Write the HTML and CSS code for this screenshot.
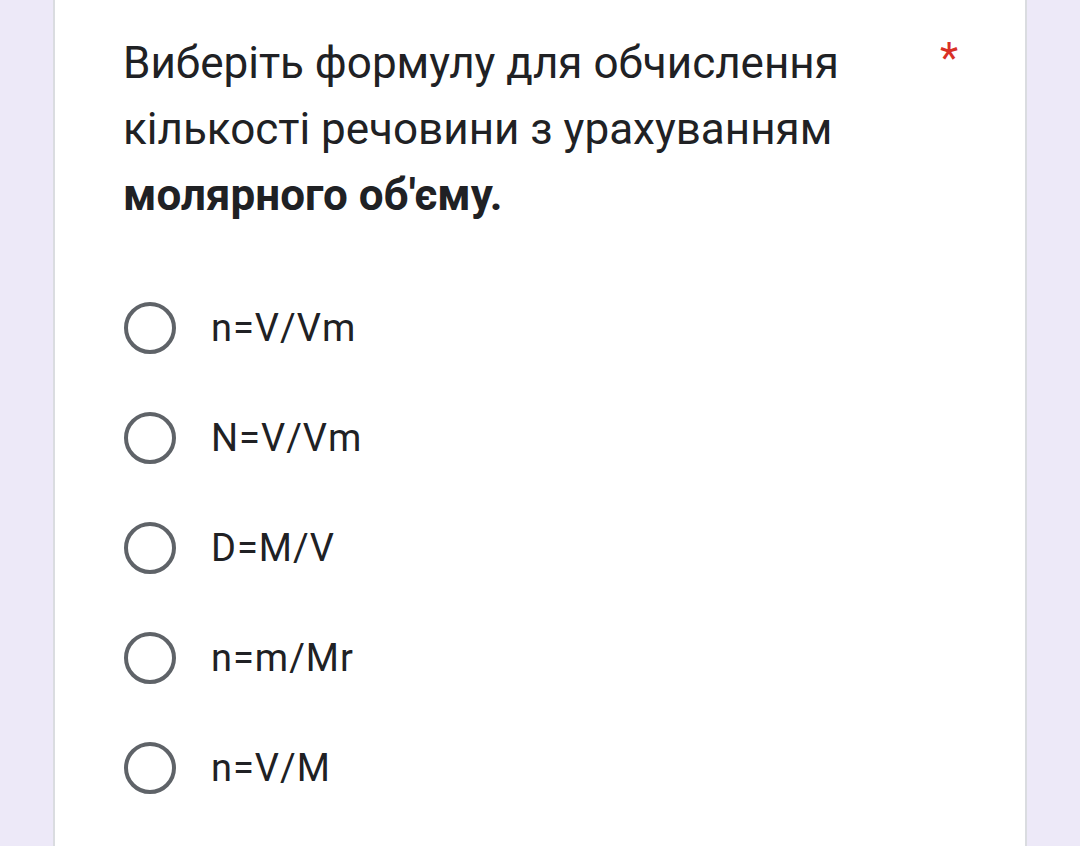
FILE: index.html
```html
<!DOCTYPE html>
<html lang="uk">
<head>
<meta charset="utf-8">
<link rel="stylesheet" href="styles.css">
</head>
<body>
<div class="page">
  <div class="card">
    <div class="question">
      <div class="title">Виберіть формулу для обчислення кількості речовини з урахуванням <b>молярного об'єму.</b></div>
      <div class="req">*</div>
    </div>
    <div class="options">
      <div class="opt"><span class="radio"></span><span class="label">n=V/Vm</span></div>
      <div class="opt"><span class="radio"></span><span class="label">N=V/Vm</span></div>
      <div class="opt"><span class="radio"></span><span class="label">D=M/V</span></div>
      <div class="opt"><span class="radio"></span><span class="label">n=m/Mr</span></div>
      <div class="opt"><span class="radio"></span><span class="label">n=V/M</span></div>
    </div>
  </div>
</div>
</body>
</html>
```
FILE: styles.css
```css
html, body {
  margin: 0;
  padding: 0;
  background: #ede9f8;
  font-family: Roboto, "Liberation Sans", sans-serif;
}
.page {
  height: 846px;
  overflow: hidden;
  padding: 0 53px 0 53px;
}
.card {
  background: #fff;
  border-left: 2px solid #dadce0;
  border-right: 2px solid #dadce0;
  height: 846px;
  padding: 30px 0 0 68px;
  box-sizing: border-box;
}
.question {
  display: flex;
  align-items: flex-start;
}
.title {
  width: 760px;
  font-size: 44px;
  line-height: 66px;
  color: #202124;
}
.title b { font-weight: 700; }
.req {
  margin-left: 57px;
  margin-top: -5px;
  color: #d93025;
  font-size: 42px;
  line-height: 66px;
}
.options {
  margin-top: 72px;
  display: flex;
  flex-direction: column;
  gap: 54px;
}
.opt {
  display: flex;
  align-items: center;
  height: 56px;
}
.radio {
  width: 44px;
  height: 44px;
  border: 4px solid #5f6368;
  border-radius: 50%;
  margin-left: 1px;
  flex: none;
}
.label {
  margin-left: 35px;
  font-size: 38px;
  letter-spacing: 1px;
  color: #202124;
}
```
